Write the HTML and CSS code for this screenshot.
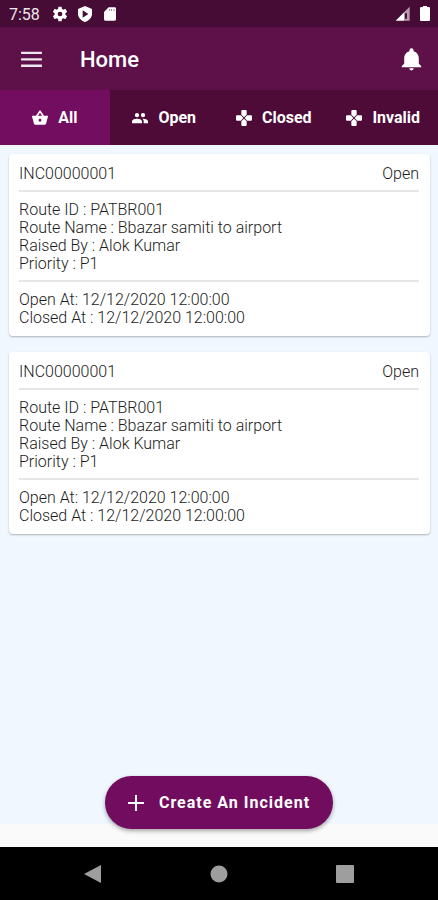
FILE: index.html
```html
<!DOCTYPE html>
<html lang="en">
<head>
<meta charset="utf-8">
<meta name="viewport" content="width=device-width, initial-scale=1">
<title>Home</title>
<link rel="stylesheet" href="styles.css">
</head>
<body>
<div class="screen">
  <div class="status">
    <span class="clock">7:58</span>
    <svg class="status-icon" viewBox="0 0 24 24"><path d="M20 13.100a8 8 0 0 0 0-2.200l2.300-1.800a.5.5 0 0 0 .1-.7l-2.200-3.800a.5.5 0 0 0-.7-.2l-2.700 1.100a8 8 0 0 0-1.900-1.100L14.500 1.500a.5.5 0 0 0-.5-.5h-4a.5.5 0 0 0-.5.500l-.4 2.900a8 8 0 0 0-1.900 1.100L4.500 4.400a.5.5 0 0 0-.7.200L1.600 8.400a.5.5 0 0 0 .1.700L4 10.900a8 8 0 0 0 0 2.200l-2.300 1.800a.5.5 0 0 0-.1.700l2.200 3.800c.1.200.4.300.7.200l2.700-1.100a8 8 0 0 0 1.900 1.100l.4 2.900c0 .3.200.5.500.5h4c.3 0 .5-.2.500-.5l.4-2.900a8 8 0 0 0 1.900-1.100l2.700 1.100c.3.100.6 0 .7-.2l2.200-3.800a.5.5 0 0 0-.1-.7zM12 15.500a3.500 3.500 0 1 1 0-7 3.500 3.500 0 0 1 0 7z"/></svg>
    <svg class="status-icon" viewBox="0 0 24 24"><path fill-rule="evenodd" d="M12 0 1.500 4.500v7.500c0 5.500 4.500 10 10.500 12 6-2 10.500-6.500 10.500-12V4.500zM8.500 6.500v11l8.500-5.500z"/></svg>
    <svg class="status-icon" viewBox="0 0 24 24"><path fill-rule="evenodd" d="M10 2 3 9v11a2 2 0 0 0 2 2h14a2 2 0 0 0 2-2V4a2 2 0 0 0-2-2zm.5 3h1v2h-1zm3.500 0h1v2h-1zm3.500 0h1v2h-1z"/></svg>
    <span class="spacer"></span>
    <svg class="status-icon" viewBox="0 0 24 24"><path d="M1 22h13V9z"/><path d="M14 9l8-8v21h-8z" opacity=".6"/><path d="M15 11h3v8h-3z" class="signal-gap"/></svg>
    <svg class="battery" viewBox="0 0 10 16"><path d="M3 0h4v1h2a1 1 0 0 1 1 1v12a1 1 0 0 1-1 1H1a1 1 0 0 1-1-1V2a1 1 0 0 1 1-1h2z"/></svg>
  </div>

  <header class="appbar">
    <button class="icon-button" type="button" aria-label="Menu"><svg viewBox="0 0 24 24"><path d="M2 4.500h20v2.300H2zm0 6.200h20V13H2zm0 6.200h20v2.300H2z" opacity=".9"/></svg></button>
    <h1 class="title">Home</h1>
    <button class="icon-button" type="button" aria-label="Notifications"><svg viewBox="0 0 24 24"><path d="M12 22.500a2.200 2.200 0 0 0 2.200-2H9.800A2.200 2.200 0 0 0 12 22.500zm7-6.500v-5c0-3.300-1.800-6.200-5-7v-.7a2 2 0 0 0-4 0V4c-3.200.8-5 3.700-5 7v5l-2.300 2.300v1.200h18.600v-1.200z"/></svg></button>
  </header>

  <nav class="tabs">
    <button class="tab tab-active" type="button"><svg viewBox="0 0 24 24"><path d="M18 8.500 13 1.200a1.200 1.200 0 0 0-2 0L6 8.500H1a1 1 0 0 0-1 1.300L3 20.500A2.200 2.200 0 0 0 5 22h14a2.200 2.200 0 0 0 2-1.500L24 9.800a1 1 0 0 0-1-1.300zm-9.200 0L12 4l3.200 4.500zM12 17.500a2.200 2.200 0 1 1 0-4.400 2.200 2.200 0 0 1 0 4.400z"/></svg>All</button>
    <button class="tab" type="button"><svg viewBox="0 0 24 24"><path d="M16.500 11a3.200 3.200 0 1 0 0-6.400 3.200 3.200 0 0 0 0 6.400zm-9 0a3.200 3.200 0 1 0 0-6.400 3.200 3.200 0 0 0 0 6.400zm0 2C5 13 0 14.200 0 16.800V20h15v-3.200C15 14.200 10 13 7.500 13zm9 0h-1c1.200.8 2 2 2 3.800V20H24v-3.200c0-2.600-5-3.800-7.500-3.800z"/></svg>Open</button>
    <button class="tab" type="button"><svg viewBox="0 0 24 24"><path d="M9.500 0h5a1.500 1.500 0 0 1 1.500 1.500v5.800l-4 3.700-4-3.700V1.500A1.500 1.500 0 0 1 9.500 0zM1.500 8h5.800l3.700 4-3.700 4H1.500A1.500 1.500 0 0 1 0 14.500v-5A1.500 1.500 0 0 1 1.500 8zm15.200 0h5.800A1.500 1.500 0 0 1 24 9.500v5a1.500 1.500 0 0 1-1.500 1.500h-5.800L13 12zM8 16.700 12 13l4 3.700v5.800a1.500 1.500 0 0 1-1.500 1.500h-5A1.500 1.500 0 0 1 8 22.500z"/></svg>Closed</button>
    <button class="tab" type="button"><svg viewBox="0 0 24 24"><path d="M9.500 0h5a1.500 1.500 0 0 1 1.500 1.500v5.800l-4 3.700-4-3.700V1.500A1.500 1.500 0 0 1 9.500 0zM1.500 8h5.800l3.700 4-3.700 4H1.500A1.500 1.500 0 0 1 0 14.500v-5A1.500 1.500 0 0 1 1.500 8zm15.200 0h5.800A1.500 1.500 0 0 1 24 9.500v5a1.500 1.500 0 0 1-1.500 1.500h-5.800L13 12zM8 16.700 12 13l4 3.700v5.800a1.500 1.500 0 0 1-1.500 1.500h-5A1.500 1.500 0 0 1 8 22.500z"/></svg>Invalid</button>
  </nav>

  <main class="content">
    <article class="card">
      <div class="card-head"><span>INC00000001</span><span>Open</span></div>
      <hr>
      <p>Route ID : PATBR001</p>
      <p>Route Name : Bbazar samiti to airport</p>
      <p>Raised By : Alok Kumar</p>
      <p>Priority : P1</p>
      <hr>
      <p>Open At: 12/12/2020 12:00:00</p>
      <p>Closed At : 12/12/2020 12:00:00</p>
    </article>
    <article class="card">
      <div class="card-head"><span>INC00000001</span><span>Open</span></div>
      <hr>
      <p>Route ID : PATBR001</p>
      <p>Route Name : Bbazar samiti to airport</p>
      <p>Raised By : Alok Kumar</p>
      <p>Priority : P1</p>
      <hr>
      <p>Open At: 12/12/2020 12:00:00</p>
      <p>Closed At : 12/12/2020 12:00:00</p>
    </article>
  </main>

  <div class="action-bar">
    <button class="create" type="button"><svg viewBox="0 0 16 16"><path d="M7 0h2v7h7v2H9v7H7V9H0V7h7z"/></svg>Create An Incident</button>
  </div>

  <nav class="system-nav">
    <button type="button" aria-label="Back"><svg viewBox="0 0 18 18"><path d="M17 0v18L0 9z"/></svg></button>
    <button type="button" aria-label="Home screen"><svg viewBox="0 0 18 18"><circle cx="9" cy="9" r="8.500"/></svg></button>
    <button type="button" aria-label="Recent apps"><svg viewBox="0 0 18 18"><rect width="18" height="18" rx="1"/></svg></button>
  </nav>
</div>
</body>
</html>
```
FILE: styles.css
```css
* { box-sizing: border-box; }

body {
  margin: 0;
  font-family: Roboto, "Liberation Sans", sans-serif;
  color: #1c1c1c;
}

button {
  margin: 0;
  padding: 0;
  border: 0;
  background: none;
  color: inherit;
  font: inherit;
}

svg {
  display: block;
  flex: none;
  fill: currentColor;
}

.screen {
  display: flex;
  flex-direction: column;
  min-height: 100vh;
  background: #fafafa;
}

.status {
  display: flex;
  align-items: center;
  gap: 9px;
  height: 27px;
  padding: 1px 8px 0 9px;
  background: #470c36;
  color: #fff;
  font-size: 16px;
}

.clock { margin-right: 3px; opacity: .9; }
.spacer { flex: 1; }
.status-icon { width: 16px; height: 16px; }
.signal-gap { fill: #470c36; }
.battery { width: 10px; height: 16px; }

.appbar {
  display: flex;
  align-items: center;
  height: 63px;
  padding: 1px 14px 0 19px;
  background: #5e1049;
  color: #fff;
}

.icon-button svg { width: 25px; height: 25px; }

.title {
  flex: 1;
  margin: 0;
  padding-left: 36px;
  font-size: 22px;
  font-weight: 500;
}

.tabs {
  display: grid;
  grid-template-columns: repeat(4, 1fr);
  height: 55px;
  background: #4f0b38;
  color: #fff;
}

.tab {
  display: flex;
  align-items: center;
  justify-content: center;
  gap: 10px;
  font-size: 16px;
  font-weight: 700;
}

.tab svg { width: 16px; height: 16px; }
.tab-active { background: #730d60; }

.content {
  flex: 1;
  display: flex;
  flex-direction: column;
  gap: 16px;
  padding: 9px 8px 24px 9px;
  background: #f0f7ff;
}

.card {
  padding: 11px 11px 9px 10px;
  border-radius: 4px;
  background: #fff;
  box-shadow: 0 1px 2px rgba(0, 0, 0, .28);
  font-size: 16px;
  font-weight: 300;
  line-height: 18px;
}

.card p { margin: 0; }

.card hr {
  height: 2px;
  margin: 7px 0 9px;
  border: 0;
  background: #e6e6e6;
}

.card-head {
  display: flex;
  justify-content: space-between;
}

.action-bar {
  display: flex;
  justify-content: center;
  height: 23px;
  align-items: flex-end;
  padding-bottom: 18px;
}

.create {
  display: flex;
  align-items: center;
  gap: 15px;
  height: 53px;
  padding: 0 23px;
  border-radius: 27px;
  background: #720c5e;
  box-shadow: 0 2px 4px rgba(0, 0, 0, .35);
  color: #fff;
  font-size: 16px;
  font-weight: 700;
  letter-spacing: 1px;
}

.create svg { width: 16px; height: 16px; }

.system-nav {
  display: flex;
  justify-content: center;
  align-items: center;
  gap: 108px;
  height: 53px;
  background: #000;
  color: #9e9e9e;
}

.system-nav svg { width: 18px; height: 18px; }
```
